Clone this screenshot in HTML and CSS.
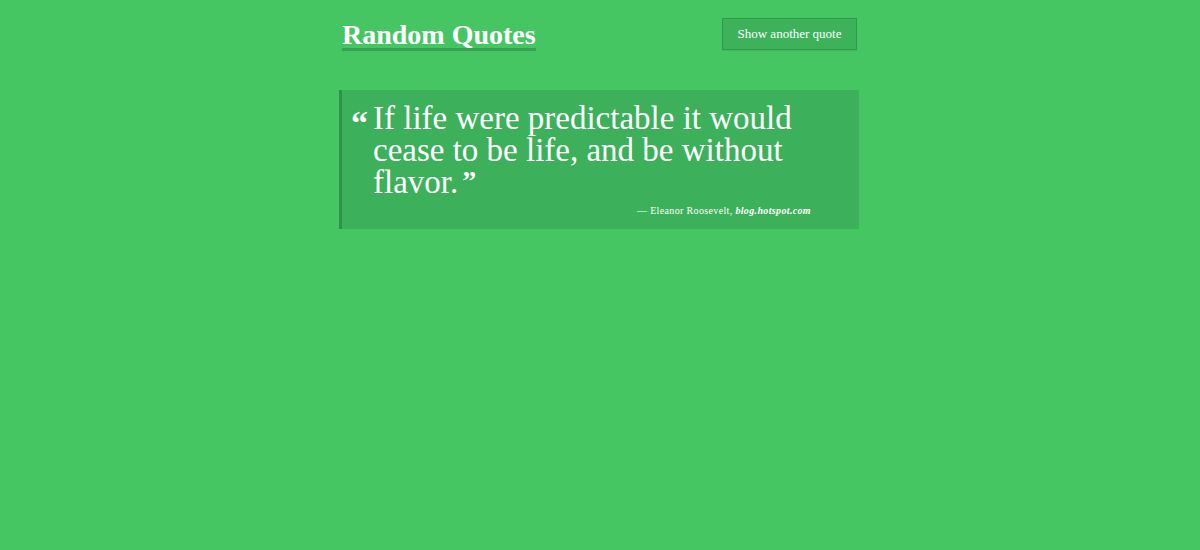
FILE: index.html
```html
<!DOCTYPE html>
<html>
<head>
<meta charset="utf-8">
<link rel="stylesheet" href="styles.css">
</head>
<body>
<div class="page">
  <header class="header">
    <h1 class="title">Random Quotes</h1>
    <button class="btn">Show another quote</button>
  </header>
  <blockquote class="quote">
    <div class="quote-body">
      <span class="mark open">“</span>
      <p class="text">If life were predictable it would cease to be life, and be without flavor.<span class="mark close">”</span></p>
    </div>
    <footer class="cite">— Eleanor Roosevelt, <em>blog.hotspot.com</em></footer>
  </blockquote>
</div>
</body>
</html>
```
FILE: styles.css
```css
html, body {
  margin: 0;
  padding: 0;
}
body {
  background: #45c663;
  color: #fff;
  font-family: "Liberation Serif", "DejaVu Serif", serif;
  height: 550px;
  padding-right: 2px;
}
.page {
  width: 520px;
  margin: 0 auto;
  padding-top: 18px;
}
.header {
  display: flex;
  justify-content: space-between;
  align-items: flex-start;
  padding-left: 3px;
  padding-right: 2px;
}
.title {
  margin: 0;
  font-size: 28px;
  font-weight: bold;
  line-height: 27px;
  padding-top: 3px;
  border-bottom: 3px solid #36a352;
}
.btn {
  background: #3db25b;
  border: 1px solid #2f9a4b;
  color: #fff;
  font-family: inherit;
  font-size: 13px;
  height: 32px;
  width: 135px;
  padding: 0;
  box-shadow: 0 1px 1px rgba(0,0,0,0.05);
}
.quote {
  margin: 39px 0 0 0;
  background: #3cb05a;
  border-left: 3px solid #2f9447;
  padding: 12px 40px 12px 10px;
  height: 115px;
}
.quote-body {
  display: flex;
  align-items: flex-start;
}
.mark {
  font-weight: bold;
}
.open {
  font-size: 34px;
  line-height: 30px;
  width: 22px;
  flex: none;
  padding-top: 6px;
  margin-left: -1px;
}
.close {
  display: inline-block;
  font-size: 28px;
  line-height: 20px;
  margin-left: 4px;
  vertical-align: 3px;
}
.text {
  margin: 0;
  font-size: 33px;
  line-height: 32px;
}
.cite {
  text-align: right;
  font-size: 10px;
  letter-spacing: 0.35px;
  margin-top: 7px;
  padding-right: 8px;
}
.cite em {
  font-weight: bold;
}
```
